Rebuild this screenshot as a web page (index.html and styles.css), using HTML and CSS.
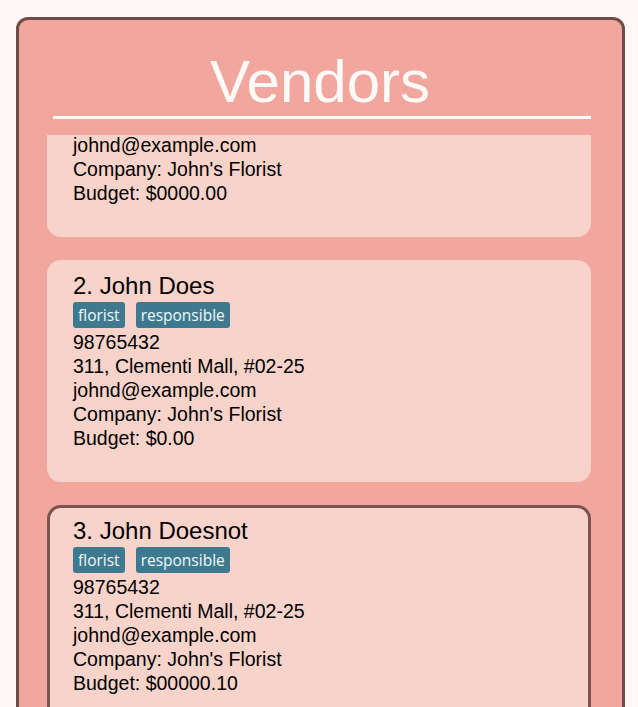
FILE: index.html
```html
<!DOCTYPE html>
<html lang="en">
<head>
<meta charset="utf-8">
<title>Vendors</title>
<link rel="stylesheet" href="styles.css">
</head>
<body>
<div class="panel">
  <h1 class="title">Vendors</h1>
  <div class="list">
    <div class="list-inner">
      <div class="card">
        <div class="name">1. John Doe</div>
        <div class="tags"><span class="tag">florist</span><span class="tag">responsible</span></div>
        <div class="line">98765432</div>
        <div class="line">311, Clementi Mall, #02-25</div>
        <div class="line">johnd@example.com</div>
        <div class="line">Company: John's Florist</div>
        <div class="line">Budget: $0000.00</div>
      </div>
      <div class="card">
        <div class="name">2. John Does</div>
        <div class="tags"><span class="tag">florist</span><span class="tag">responsible</span></div>
        <div class="line">98765432</div>
        <div class="line">311, Clementi Mall, #02-25</div>
        <div class="line">johnd@example.com</div>
        <div class="line">Company: John's Florist</div>
        <div class="line">Budget: $0.00</div>
      </div>
      <div class="card selected">
        <div class="name">3. John Doesnot</div>
        <div class="tags"><span class="tag">florist</span><span class="tag">responsible</span></div>
        <div class="line">98765432</div>
        <div class="line">311, Clementi Mall, #02-25</div>
        <div class="line">johnd@example.com</div>
        <div class="line">Company: John's Florist</div>
        <div class="line">Budget: $00000.10</div>
      </div>
    </div>
  </div>
</div>
</body>
</html>
```

FILE: styles.css
```css
html, body {
  margin: 0;
  padding: 0;
  overflow: hidden;
}
body {
  background: #fff8f7;
  font-family: "Liberation Sans", Arial, sans-serif;
  color: #000;
  padding: 17px 13px 0 16px;
  height: 707px;
  box-sizing: border-box;
}
.panel {
  width: 609px;
  height: 740px;
  box-sizing: border-box;
  background: #f1a79e;
  border: 3px solid #6f4b47;
  border-radius: 12px;
  padding: 27px 31px 0 28px;
  display: flex;
  flex-direction: column;
}
.title {
  margin: 0 0 16px 6px;
  font-weight: normal;
  font-size: 60px;
  line-height: 69px;
  text-align: center;
  color: #fffaf8;
  border-bottom: 3px solid #fffaf8;
  padding-right: 4px;
}
.list {
  flex: 1;
  overflow: hidden;
}
.list-inner {
  margin-top: -120px;
}
.card {
  background: #f8d3ca;
  border-radius: 14px;
  padding: 13px 20px 32px 26px;
  margin-bottom: 23px;
}
.card.selected {
  border: 3px solid #7a5550;
  padding: 10px 17px 29px 23px;
}
.name {
  font-size: 24px;
  line-height: 26px;
}
.tags {
  display: flex;
  gap: 11px;
  margin: 3px 0 2px;
}
.tag {
  background: #3e7a8f;
  color: #f2f8fb;
  font-family: "Open Sans", "Noto Sans", sans-serif;
  font-size: 15.5px;
  line-height: 20px;
  padding: 3px 5px;
  border-radius: 3px;
}
.line {
  font-size: 19.5px;
  line-height: 24px;
}
```
